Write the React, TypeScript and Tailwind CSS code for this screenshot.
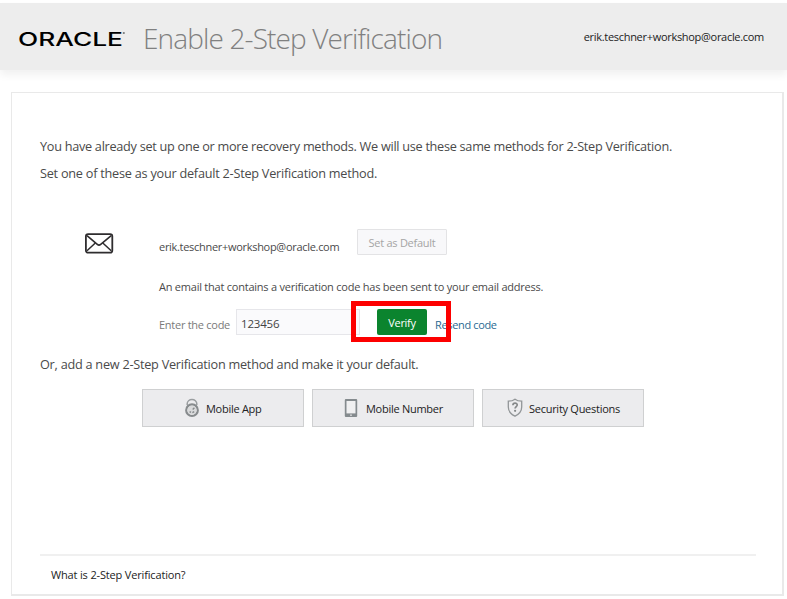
import React from "react";

function OracleLogo() {
  return (
    <svg width="108" height="24" viewBox="0 0 108 24" className="block overflow-visible" aria-label="Oracle">
      <text
        x="-1"
        y="20.5"
        textLength="105"
        lengthAdjust="spacingAndGlyphs"
        className="fill-black font-['Inter',sans-serif] text-[18.5px] font-medium"
      >
        ORACLE
      </text>
      <circle cx="104.8" cy="8" r="1.1" fill="#777" />
    </svg>
  );
}

function MailIcon() {
  return (
    <svg width="30" height="22" viewBox="0 0 30 22" className="block" fill="none" stroke="#2f2d2f">
      <rect x="1.9" y="2.1" width="26.4" height="18.6" rx="2.2" strokeWidth="1.8" />
      <path d="M3 3.7 L13.3 12.4 Q15 13.8 16.7 12.4 L27.2 3.7" strokeWidth="1.6" />
      <path d="M3 18.8 L11.3 11 M27.2 18.8 L18.8 11" strokeWidth="1.5" />
    </svg>
  );
}

function LockIcon() {
  return (
    <svg width="16" height="20" viewBox="0 0 16 20" className="block" fill="none">
      <path d="M3.2 7 V5.8 A4.8 4.4 0 0 1 12.8 5.8 V7" stroke="#9a9ea0" strokeWidth="1.5" />
      <circle cx="8" cy="12.2" r="5.8" stroke="#878b8d" strokeWidth="2.2" />
      <circle cx="8" cy="12.2" r="4.5" fill="#d9dadb" />
      <path d="M5.6 13.6 L7 14.4 M8.4 14.6 L10.2 13.6 M8.7 11.4 L10.4 9.8" stroke="#85898b" strokeWidth="1.4" />
    </svg>
  );
}

function PhoneIcon() {
  return (
    <svg width="14" height="20" viewBox="0 0 14 20" className="block">
      <rect x="0.8" y="1" width="12.4" height="18" rx="1" fill="#858b8e" />
      <rect x="2.5" y="3" width="9" height="12.4" fill="#f0f0f1" />
      <circle cx="7" cy="17.2" r="0.9" fill="#d8dadb" />
    </svg>
  );
}

function ShieldIcon() {
  return (
    <svg width="16" height="20" viewBox="0 0 16 20" className="block" fill="none">
      <path
        d="M8 1.2 C6 2.8 3.5 3.2 1.3 3.2 V9 C1.3 13.4 4 16.2 8 18.2 C12 16.2 14.7 13.4 14.7 9 V3.2 C12.5 3.2 10 2.8 8 1.2 Z"
        stroke="#929698"
        strokeWidth="1.3"
      />
      <path d="M5.9 7.2 C5.9 4.3 10.4 4.5 10.2 7 C10.1 8.6 8.1 8.6 8.1 10.6" stroke="#858889" strokeWidth="1.7" />
      <circle cx="8.1" cy="12.8" r="1.1" fill="#858889" />
    </svg>
  );
}

function MethodButton({ icon, pad, children }: { icon: React.ReactNode; pad: string; children: React.ReactNode }) {
  return (
    <button
      className={`flex h-[38px] w-[162px] items-center border border-[#cfd0d1] bg-[#ececee] text-[11px] tracking-[-0.27px] whitespace-nowrap text-[#222] ${pad}`}
    >
      {icon}
      <span className="pt-[2px]">{children}</span>
    </button>
  );
}

export default function App() {
  return (
    <div className="h-[599px] w-[787px] overflow-hidden bg-white pt-[3px] font-['Open_Sans','Noto_Sans',sans-serif] text-[#4a4a4a]">
      <header className="flex h-[67px] items-center bg-[#ededed] pl-[19px] shadow-[0_5px_8px_rgba(0,0,0,0.06)]">
        <div className="pt-[1px]">
          <OracleLogo />
        </div>
        <h1 className="ml-[16px] pt-[3px] text-[28px] leading-[40px] font-light tracking-[-0.87px] whitespace-nowrap text-[#808080]">
          Enable 2-Step Verification
        </h1>
        <span className="mr-[23px] ml-auto pt-[2px] text-[11px] tracking-[-0.3px] text-[#222]">
          erik.teschner+workshop@oracle.com
        </span>
      </header>

      <main className="mt-[22px] ml-[11px] flex h-[504px] w-[773px] flex-col border border-r-2 border-b-2 border-[#e9e9e9] pt-[40px] pl-[28px]">
        <p className="h-[27px] text-[12.7px] leading-[27px] tracking-[-0.28px] whitespace-nowrap">
          You have already set up one or more recovery methods. We will use these same methods for 2-Step Verification.
        </p>
        <p className="h-[27px] text-[12.7px] leading-[27px] tracking-[-0.24px] whitespace-nowrap">
          Set one of these as your default 2-Step Verification method.
        </p>

        <section className="mt-[42px] flex h-[106px] tracking-[-0.27px]">
          <div className="w-[119px] pt-[3px] pl-[44px]">
            <MailIcon />
          </div>
          <div className="flex flex-col text-[11px] whitespace-nowrap">
            <div className="flex h-[26px]">
              <span className="w-[198px] pt-[9px] leading-[18px] tracking-[-0.3px]">
                erik.teschner+workshop@oracle.com
              </span>
              <button className="h-[26px] w-[90px] rounded-[1px] border border-[#e3e3e5] bg-[#f8f8fa] pt-[3px] text-[11px] tracking-[-0.27px] text-[#a5a5a5]">
                Set as Default
              </button>
            </div>
            <p className="mt-[23px] leading-[18px] tracking-[-0.23px]">
              An email that contains a verification code has been sent to your email address.
            </p>
            <div className="relative mt-[13px] flex h-[26px]">
              <span className="w-[77px] pt-[7px] leading-[18px] text-[#7a7a7a]">Enter the code</span>
              <input
                className="h-[26px] w-[124px] border border-[#e6e6ea] bg-[#fafafc] pt-[2px] pl-[4px] text-[11.5px] tracking-[-0.2px] text-[#444]"
                defaultValue="123456"
              />
              <button className="ml-[17px] h-[26px] w-[50px] rounded-[2px] bg-[#0b842e] pt-[3px] text-[11px] tracking-[-0.27px] text-white">
                Verify
              </button>
              <a className="ml-[8px] pt-[7px] leading-[18px] tracking-[-0.35px] text-[#2b6a92]">Resend code</a>
              <div className="absolute top-[-8px] left-[192px] h-[41px] w-[100px] border-[5px] border-[#fd0000]" />
            </div>
          </div>
        </section>

        <p className="mt-[16px] h-[26px] text-[12.7px] leading-[26px] tracking-[-0.25px] whitespace-nowrap">
          Or, add a new 2-Step Verification method and make it your default.
        </p>
        <div className="mt-[12px] ml-[102px] flex gap-2">
          <MethodButton icon={<LockIcon />} pad="gap-[6px] pl-[41px]">
            Mobile App
          </MethodButton>
          <MethodButton icon={<PhoneIcon />} pad="gap-[8px] pl-[31px]">
            Mobile Number
          </MethodButton>
          <MethodButton icon={<ShieldIcon />} pad="gap-[6px] pl-[24px]">
            Security Questions
          </MethodButton>
        </div>
        <footer className="mt-[127px] w-[716px] border-t-2 border-[#f0f0f0] pt-[10px] pl-[11px] text-[11px] leading-[18px] tracking-[-0.16px] text-[#222]">
          What is 2-Step Verification?
        </footer>
      </main>
    </div>
  );
}
